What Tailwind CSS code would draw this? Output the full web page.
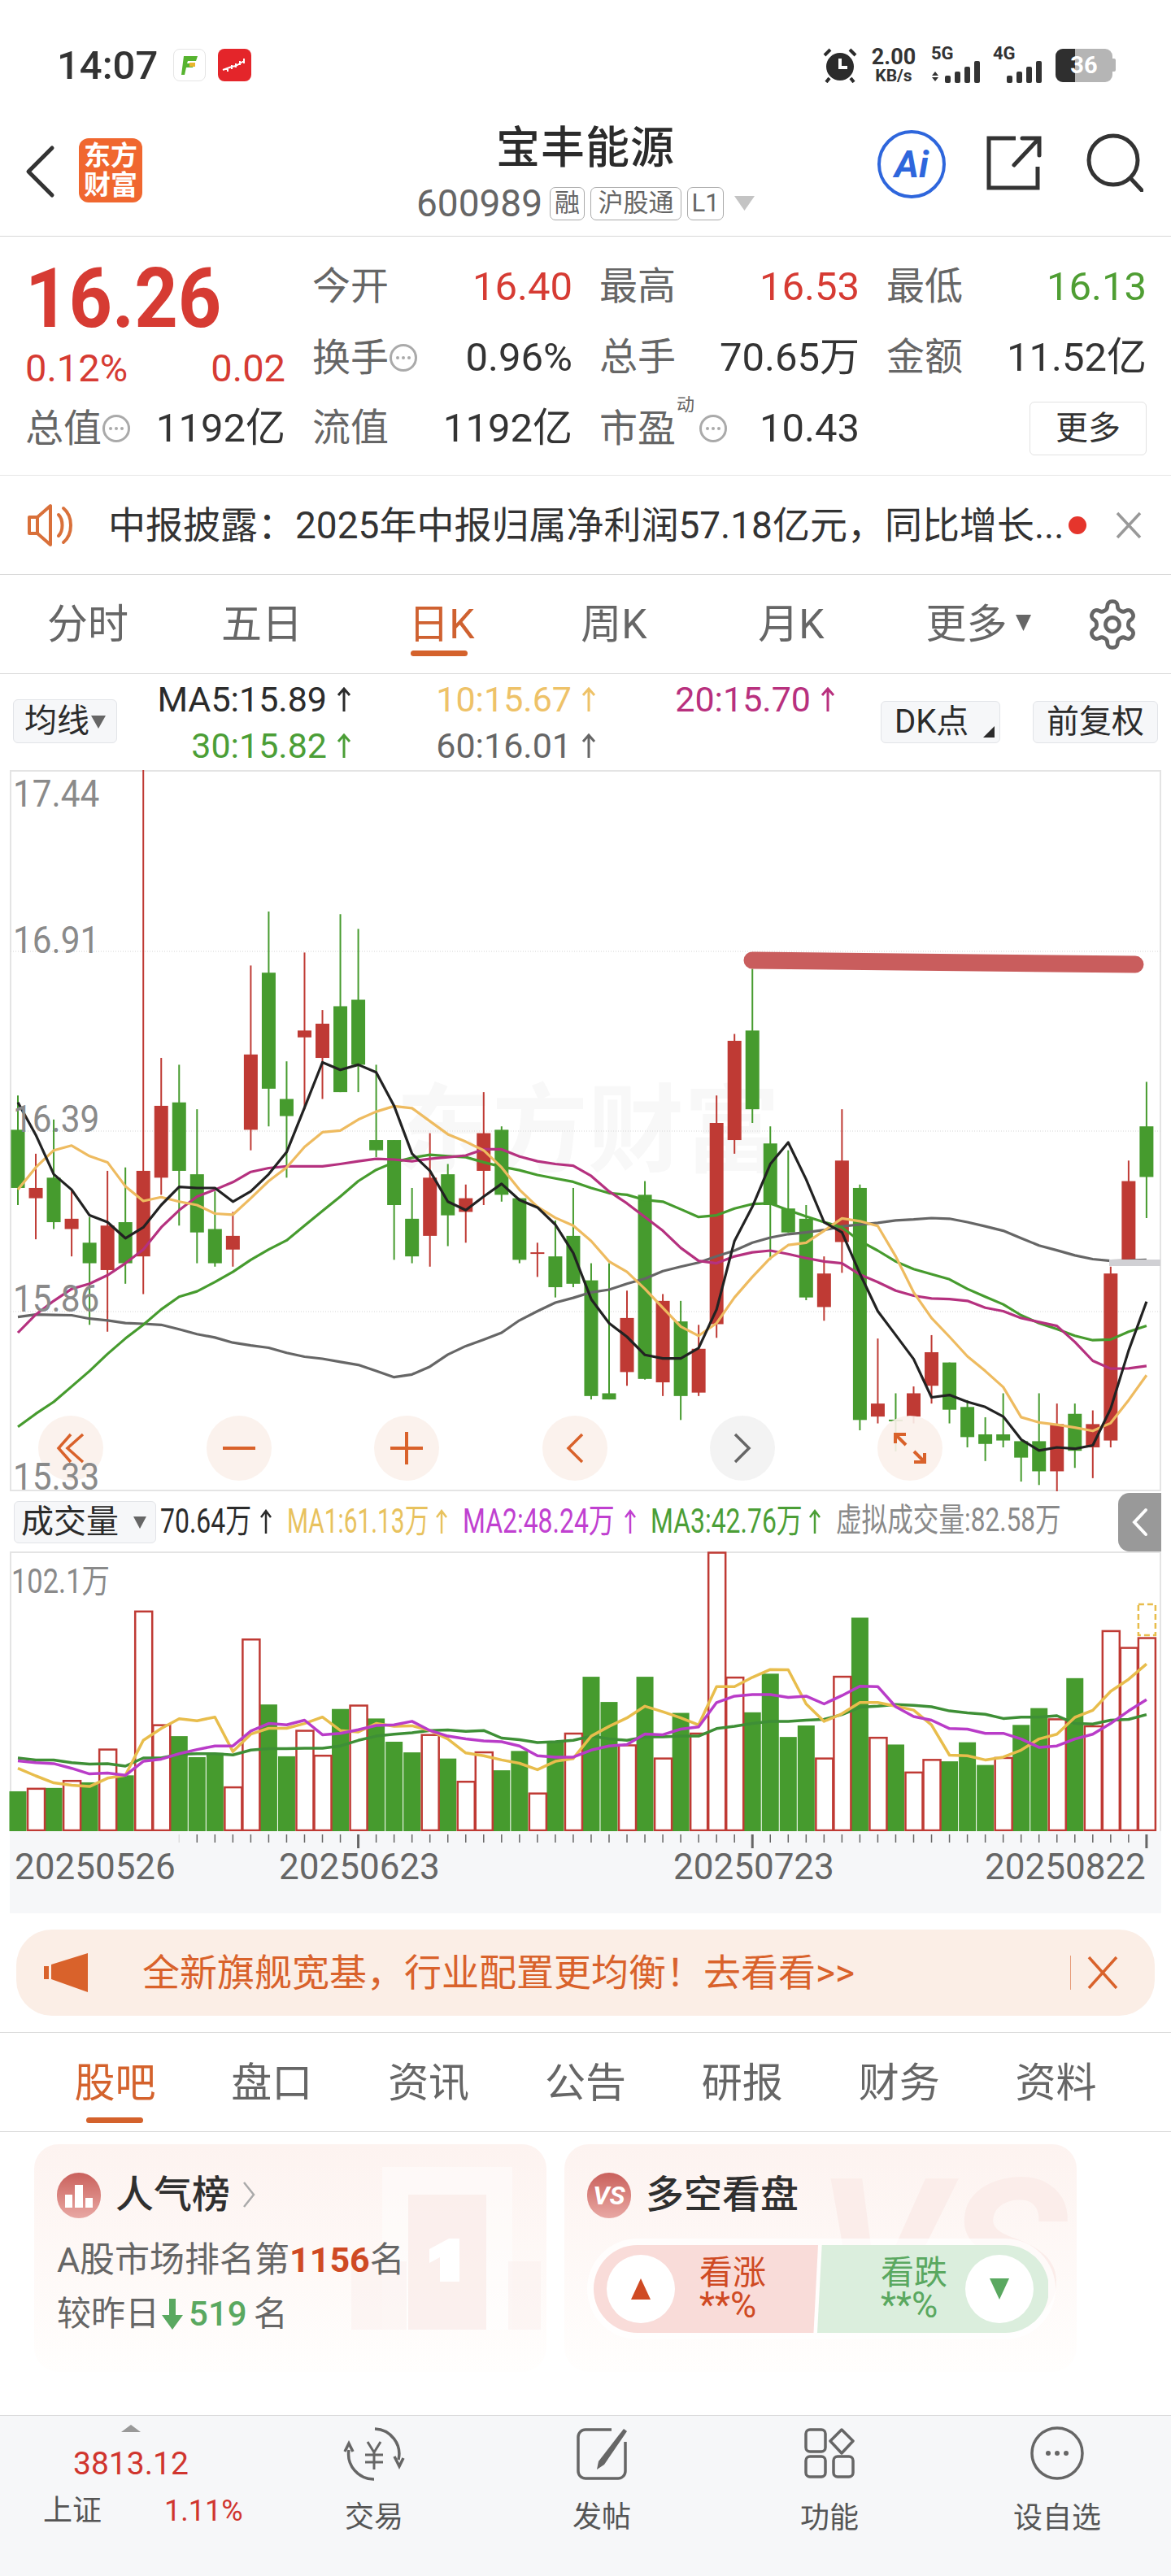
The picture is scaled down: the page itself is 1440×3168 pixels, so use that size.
<!DOCTYPE html>
<html lang="zh-CN">
<head>
  <meta charset="UTF-8" />
  <title>宝丰能源</title>
  <script src="https://cdn.jsdelivr.net/npm/@tailwindcss/browser@4"></script>
</head>
<body class="bg-white text-[#333] font-['Roboto','Noto_Sans_CJK_SC',sans-serif]">
<div class="w-[1440px] h-[3168px] overflow-hidden">

  <!-- status bar -->
  <div class="h-[150px] pt-[10px] flex items-center relative">
    <span class="ml-[70px] text-[49px] font-medium leading-none text-[#333]">14:07</span>
    <div class="ml-[19px] w-[40px] h-[40px] rounded-[8px] border border-[#e5e5e5] flex items-center justify-center">
      <svg width="24" height="28" viewBox="0 0 24 28"><path d="M5 3H22L20 9H10L9 12H18L16 17H8L6 26H2Z" fill="#56b32f"/><rect x="12" y="11" width="7" height="5" fill="#e9b52c"/></svg>
    </div>
    <div class="ml-[15px] w-[41px] h-[40px] rounded-[8px] bg-[#e4252a] flex items-center justify-center">
      <svg width="34" height="20" viewBox="0 0 34 20" fill="none" stroke="#fff" stroke-width="2"><path d="M2 16h3M8 14v4M13 10v5M18 8v5M23 5v5M28 2v6M2 16L13 12L18 11L28 5" /></svg>
    </div>
    <div class="ml-auto mr-[68px] flex items-center">
      <svg width="44" height="44" viewBox="0 0 44 44"><circle cx="22" cy="24" r="17" fill="#2b2b2b"/><path d="M22 14V25H31" fill="none" stroke="#fff" stroke-width="4"/><path d="M3 10L10 3M41 10L34 3M9 38L5 43M35 38L39 43" stroke="#2b2b2b" stroke-width="4"/></svg>
      <div class="ml-[16px] w-[56px] flex flex-col items-center font-bold text-[#333]">
        <span class="text-[27px] leading-[25px]">2.00</span>
        <span class="text-[21px] leading-[20px]">KB/s</span>
      </div>
      <div class="ml-[18px] w-[64px] h-[44px] relative">
        <span class="absolute left-0 top-[-3px] text-[22px] font-bold leading-none">5G</span>
        <svg class="absolute left-0 bottom-0" width="64" height="28" viewBox="0 0 64 28" fill="#333"><path d="M5 14L9 19H1ZM5 26L1 21H9Z"/><rect x="17" y="19" width="7" height="9" rx="2"/><rect x="29" y="14" width="7" height="14" rx="2"/><rect x="41" y="8" width="7" height="20" rx="2"/><rect x="53" y="1" width="7" height="27" rx="2"/></svg>
      </div>
      <div class="ml-[12px] w-[63px] h-[44px] relative">
        <span class="absolute left-0 top-[-3px] text-[22px] font-bold leading-none">4G</span>
        <svg class="absolute right-0 bottom-0" width="46" height="28" viewBox="0 0 46 28" fill="#333"><rect x="0" y="19" width="7" height="9" rx="2"/><rect x="12" y="14" width="7" height="14" rx="2"/><rect x="24" y="8" width="7" height="20" rx="2"/><rect x="36" y="1" width="7" height="27" rx="2"/></svg>
      </div>
      <div class="ml-[14px] w-[70px] h-[41px] rounded-[9px] overflow-hidden flex relative bg-[#b5b5b5]">
        <div class="w-[24px] bg-[#2f2f2f]"></div>
        <span class="absolute inset-0 flex items-center justify-center text-[29px] font-bold text-white leading-none">36</span>
      </div>
      <div class="w-[4px] h-[16px] bg-[#b5b5b5] rounded-r-[2px]"></div>
    </div>
  </div>

  <!-- nav -->
  <div class="h-[141px] border-b border-[#d9d9d9] grid grid-cols-[1fr_auto_1fr] pt-[6px]">
    <div class="flex items-start pl-[31px] pt-[22px]">
      <svg width="38" height="66" viewBox="0 0 38 66" fill="none" stroke="#333" stroke-width="5" stroke-linecap="round" stroke-linejoin="round"><path d="M33 4L4 33L33 62"/></svg>
      <div class="ml-[28px] mt-[-8px] w-[78px] h-[79px] rounded-[12px] bg-[#f0672f] text-white text-[33px] font-bold leading-[36px] flex flex-col items-center justify-center">
        <span>东方</span><span>财富</span>
      </div>
    </div>
    <div class="flex flex-col items-center">
      <div class="text-[54px] leading-[54px] font-medium tracking-[1px] text-[#2b2b2b]">宝丰能源</div>
      <div class="mt-[17px] flex items-center h-[46px] text-[#666]">
        <span class="text-[46px] leading-none">600989</span>
        <span class="ml-[9px] h-[41px] w-[43px] border border-[#aaa] rounded-[7px] text-[31px] flex items-center justify-center">融</span>
        <span class="ml-[7px] h-[41px] w-[112px] border border-[#aaa] rounded-[7px] text-[31px] flex items-center justify-center">沪股通</span>
        <span class="ml-[7px] h-[41px] w-[45px] border border-[#aaa] rounded-[7px] text-[31px] flex items-center justify-center">L1</span>
        <svg class="ml-[13px]" width="25" height="18" viewBox="0 0 25 18"><path d="M0 0H25L12.5 18Z" fill="#c4c4c4"/></svg>
      </div>
    </div>
    <div class="flex items-start justify-end pr-[34px] pt-[4px]">
      <div class="w-[84px] h-[84px] rounded-full border-[4px] border-[#2e66dc] flex items-center justify-center text-[#2e66dc] text-[46px] font-bold italic leading-none">Ai</div>
      <svg class="ml-[50px] mt-[7px]" width="68" height="68" viewBox="0 0 68 68" fill="none" stroke="#333" stroke-width="5"><path d="M36 3H3V64H63V38"/><path d="M34 36L64 4M44 3H65V24" stroke-linecap="round"/></svg>
      <svg class="ml-[53px] mt-[4px]" width="72" height="72" viewBox="0 0 72 72" fill="none" stroke="#333" stroke-width="5"><circle cx="35" cy="33" r="30"/><path d="M56 55L70 70" stroke-linecap="round"/></svg>
    </div>
  </div>

  <!-- quote -->
  <div class="h-[294px] border-b border-[#e6e6e6] pl-[31px] pt-[18px] grid grid-cols-[320px_320px_320px_320px] gap-x-[33px] grid-rows-[87px_87px_87px] items-center text-[49px] leading-none">
    <div class="row-span-2 self-start flex flex-col text-[#d63b33]">
      <span class="mt-[8px] text-[102px] leading-[100px] font-bold origin-left scale-x-[0.915]">16.26</span>
      <div class="mt-[11px] flex justify-between text-[47px] leading-[50px]"><span>0.12%</span><span>0.02</span></div>
    </div>
    <div class="flex justify-between"><span class="text-[47px] text-[#666]">今开</span><span class="text-[#d63b33]">16.40</span></div>
    <div class="flex justify-between"><span class="text-[47px] text-[#666]">最高</span><span class="text-[#d63b33]">16.53</span></div>
    <div class="flex justify-between"><span class="text-[47px] text-[#666]">最低</span><span class="text-[#4f9e33]">16.13</span></div>

    <div class="flex justify-between items-center">
      <span class="flex items-center text-[47px] text-[#666]">换手
        <svg width="36" height="36" viewBox="0 0 36 36" fill="none" stroke="#aaa" stroke-width="3"><circle cx="18" cy="18" r="15.5"/><g fill="#aaa" stroke="none"><circle cx="11" cy="18" r="2"/><circle cx="18" cy="18" r="2"/><circle cx="25" cy="18" r="2"/></g></svg>
      </span>
      <span>0.96%</span>
    </div>
    <div class="flex justify-between"><span class="text-[47px] text-[#666]">总手</span><span>70.65万</span></div>
    <div class="flex justify-between"><span class="text-[47px] text-[#666]">金额</span><span>11.52亿</span></div>

    <div class="flex justify-between items-center">
      <span class="flex items-center text-[47px] text-[#666]">总值
        <svg width="36" height="36" viewBox="0 0 36 36" fill="none" stroke="#aaa" stroke-width="3"><circle cx="18" cy="18" r="15.5"/><g fill="#aaa" stroke="none"><circle cx="11" cy="18" r="2"/><circle cx="18" cy="18" r="2"/><circle cx="25" cy="18" r="2"/></g></svg>
      </span>
      <span>1192亿</span>
    </div>
    <div class="flex justify-between"><span class="text-[47px] text-[#666]">流值</span><span>1192亿</span></div>
    <div class="flex justify-between items-center">
      <span class="flex items-center text-[47px] text-[#666] relative">市盈
        <span class="absolute left-[95px] top-[-16px] text-[22px]">动</span>
        <svg class="ml-[28px]" width="36" height="36" viewBox="0 0 36 36" fill="none" stroke="#aaa" stroke-width="3"><circle cx="18" cy="18" r="15.5"/><g fill="#aaa" stroke="none"><circle cx="11" cy="18" r="2"/><circle cx="18" cy="18" r="2"/><circle cx="25" cy="18" r="2"/></g></svg>
      </span>
      <span>10.43</span>
    </div>
    <div class="flex justify-end">
      <span class="w-[144px] h-[66px] border border-[#e2e2e2] rounded-[6px] text-[40px] flex items-center justify-center">更多</span>
    </div>
  </div>

  <!-- notice -->
  <div class="h-[122px] border-b border-[#d9d9d9] flex items-center pl-[34px] relative">
    <svg width="60" height="54" viewBox="0 0 60 54" fill="none" stroke="#d9703a" stroke-width="4" stroke-linejoin="round"><path d="M2 17H12L28 3V51L12 37H2Z"/><path d="M12 17V37"/><path d="M38 14C44 20 44 34 38 40M44 6C56 16 56 38 44 48" stroke-linecap="round"/></svg>
    <span class="ml-[39px] text-[46px] leading-none text-[#333] whitespace-nowrap">中报披露：2025年中报归属净利润57.18亿元，同比增长...</span>
    <span class="absolute left-[1314px] top-[50px] w-[22px] h-[22px] rounded-full bg-[#e5352c]"></span>
    <svg class="absolute left-[1371px] top-[44px]" width="34" height="34" viewBox="0 0 34 34" stroke="#999" stroke-width="3.5"><path d="M3 2L31 32M31 2L3 32"/></svg>
  </div>

  <!-- period tabs -->
  <div class="h-[122px] border-b border-[#d9d9d9] flex text-[50px] text-[#666] leading-none">
    <div class="grid grid-cols-[216px_212px_230px_194px_242px_218px] items-center">
      <span class="text-center">分时</span>
      <span class="text-center">五日</span>
      <span class="text-center text-[#cf6130] relative">日K<span class="absolute left-[77px] top-[57px] w-[70px] h-[7px] rounded-full bg-[#d4622c]"></span></span>
      <span class="text-center">周K</span>
      <span class="text-center">月K</span>
      <span class="flex items-center justify-center">更多<svg class="ml-[10px] mb-[4px]" width="19" height="20" viewBox="0 0 19 20"><path d="M0 0H19L9.5 20Z" fill="#666"/></svg></span>
    </div>
    <svg class="ml-[22px] mt-[27px]" width="68" height="68" viewBox="0 0 24 24" fill="none" stroke="#666" stroke-width="1.7" stroke-linejoin="round"><path d="M12.22 2h-.44a2 2 0 0 0-2 2v.18a2 2 0 0 1-1 1.73l-.43.25a2 2 0 0 1-2 0l-.15-.08a2 2 0 0 0-2.73.73l-.22.38a2 2 0 0 0 .73 2.73l.15.1a2 2 0 0 1 1 1.72v.51a2 2 0 0 1-1 1.74l-.15.09a2 2 0 0 0-.73 2.73l.22.38a2 2 0 0 0 2.73.73l.15-.08a2 2 0 0 1 2 0l.43.25a2 2 0 0 1 1 1.73V20a2 2 0 0 0 2 2h.44a2 2 0 0 0 2-2v-.18a2 2 0 0 1 1-1.73l.43-.25a2 2 0 0 1 2 0l.15.08a2 2 0 0 0 2.73-.73l.22-.39a2 2 0 0 0-.73-2.73l-.15-.08a2 2 0 0 1-1-1.74v-.5a2 2 0 0 1 1-1.74l.15-.09a2 2 0 0 0 .73-2.73l-.22-.38a2 2 0 0 0-2.73-.73l-.15.08a2 2 0 0 1-2 0l-.43-.25a2 2 0 0 1-1-1.73V4a2 2 0 0 0-2-2z"/><circle cx="12" cy="12" r="3"/></svg>
  </div>

  <!-- MA legend -->
  <div class="h-[118px] flex items-start text-[43px] leading-none">
    <div class="ml-[16px] mt-[31px] w-[128px] h-[54px] rounded-[6px] border border-[#e2e4e8] bg-[#f6f7f9] flex items-center justify-center text-[40px] text-[#2b2b2b]">均线<svg class="ml-[2px]" width="18" height="18" viewBox="0 0 18 18"><path d="M0 2H18L9 18Z" fill="#666"/></svg></div>
    <div class="grid grid-cols-[288px_301px_294px] grid-rows-[57px_57px] items-center pt-[3px]">
      <span class="flex items-center justify-end gap-[12px] text-[#2b2b2b]">MA5:15.89<svg width="18" height="31" viewBox="0 0 18 31" fill="none" stroke="currentColor" stroke-width="3"><path d="M9 30V2M2 10L9 2L16 10"/></svg></span>
      <span class="flex items-center justify-end gap-[12px] text-[#eec268]">10:15.67<svg width="18" height="31" viewBox="0 0 18 31" fill="none" stroke="currentColor" stroke-width="3"><path d="M9 30V2M2 10L9 2L16 10"/></svg></span>
      <span class="flex items-center justify-end gap-[12px] text-[#b8307e]">20:15.70<svg width="18" height="31" viewBox="0 0 18 31" fill="none" stroke="currentColor" stroke-width="3"><path d="M9 30V2M2 10L9 2L16 10"/></svg></span>
      <span class="flex items-center justify-end gap-[12px] text-[#4b9e36]">30:15.82<svg width="18" height="31" viewBox="0 0 18 31" fill="none" stroke="currentColor" stroke-width="3"><path d="M9 30V2M2 10L9 2L16 10"/></svg></span>
      <span class="flex items-center justify-end gap-[12px] text-[#666]">60:16.01<svg width="18" height="31" viewBox="0 0 18 31" fill="none" stroke="currentColor" stroke-width="3"><path d="M9 30V2M2 10L9 2L16 10"/></svg></span>
    </div>
    <div class="ml-[56px] mt-[33px] w-[147px] h-[52px] rounded-[6px] border border-[#e2e4e8] bg-[#f6f7f9] flex items-center pl-[16px] text-[40px] text-[#2b2b2b] relative">DK点<svg class="absolute right-[6px] bottom-[6px]" width="14" height="14" viewBox="0 0 14 14"><path d="M14 0V14H0Z" fill="#2b2b2b"/></svg></div>
    <div class="ml-[40px] mt-[33px] w-[154px] h-[52px] rounded-[6px] border border-[#e2e4e8] bg-[#f6f7f9] flex items-center justify-center text-[40px] text-[#2b2b2b]">前复权</div>
  </div>

  <!-- candle chart -->
  <div class="relative h-[887px]">
    <div class="absolute left-[487px] top-[386px] text-[118px] leading-none font-bold text-[#f8f8f8] whitespace-nowrap">东方财富</div>
    <svg id="kline" class="absolute inset-0" width="1440" height="887" viewBox="0 947 1440 887"></svg>

    <div class="absolute left-[47px] top-[794px] w-[80px] h-[80px] rounded-full bg-[#fbf1eb]/90 flex items-center justify-center">
      <svg width="36" height="38" viewBox="0 0 36 38" fill="none" stroke="#d9622b" stroke-width="3.5"><path d="M18 2L3 19L18 36M33 2L14 19L33 36"/></svg>
    </div>
    <div class="absolute left-[254px] top-[794px] w-[80px] h-[80px] rounded-full bg-[#fbf1eb]/90 flex items-center justify-center">
      <svg width="40" height="6" viewBox="0 0 40 6"><rect width="40" height="4" y="1" fill="#d9622b"/></svg>
    </div>
    <div class="absolute left-[460px] top-[794px] w-[80px] h-[80px] rounded-full bg-[#fbf1eb]/90 flex items-center justify-center">
      <svg width="40" height="40" viewBox="0 0 40 40" fill="#d9622b"><rect y="18" width="40" height="4"/><rect x="18" width="4" height="40"/></svg>
    </div>
    <div class="absolute left-[667px] top-[794px] w-[80px] h-[80px] rounded-full bg-[#fbf1eb]/90 flex items-center justify-center">
      <svg width="22" height="38" viewBox="0 0 22 38" fill="none" stroke="#d9622b" stroke-width="3.5"><path d="M20 2L3 19L20 36"/></svg>
    </div>
    <div class="absolute left-[873px] top-[794px] w-[80px] h-[80px] rounded-full bg-[#f2f2f2]/90 flex items-center justify-center">
      <svg width="22" height="38" viewBox="0 0 22 38" fill="none" stroke="#666" stroke-width="3.5"><path d="M2 2L19 19L2 36"/></svg>
    </div>
    <div class="absolute left-[1079px] top-[794px] w-[80px] h-[80px] rounded-full bg-[#fbf1eb]/90 flex items-center justify-center">
      <svg width="42" height="40" viewBox="0 0 42 40" fill="none" stroke="#d9622b" stroke-width="4"><path d="M3 14V3H16M3 3L16 16M39 26V37H26M39 37L26 24"/></svg>
    </div>

    <span class="absolute left-[16px] top-[6px] text-[46px] leading-none text-[#8a8a8a] origin-left scale-x-[0.92]">17.44</span>
    <span class="absolute left-[16px] top-[186px] text-[46px] leading-none text-[#8a8a8a] origin-left scale-x-[0.92]">16.91</span>
    <span class="absolute left-[16px] top-[406px] text-[46px] leading-none text-[#8a8a8a] origin-left scale-x-[0.92]">16.39</span>
    <span class="absolute left-[16px] top-[627px] text-[46px] leading-none text-[#8a8a8a] origin-left scale-x-[0.92]">15.86</span>
    <span class="absolute left-[16px] top-[846px] text-[46px] leading-none text-[#8a8a8a] origin-left scale-x-[0.92]">15.33</span>
  </div>

  <!-- volume legend -->
  <div class="h-[74px] relative">
    <div class="absolute left-[17px] top-[12px] w-[175px] h-[52px] rounded-[6px] border border-[#e2e4e8] bg-[#f6f7f9] flex items-center pl-[8px] text-[40px] leading-none text-[#2b2b2b]">成交量<svg class="ml-[18px]" width="16" height="16" viewBox="0 0 16 16"><path d="M0 1H16L8 16Z" fill="#666"/></svg></div>
    <span class="absolute left-[197px] top-[16px] text-[42px] leading-none whitespace-nowrap origin-left scale-x-[0.76] text-[#2b2b2b]">70.64万</span>
    <svg class="absolute left-[319px] top-[22px] text-[#2b2b2b]" width="16" height="31" viewBox="0 0 16 31" fill="none" stroke="currentColor" stroke-width="2.5"><path d="M8 30V2M2 10L8 2L14 10"/></svg>
    <span class="absolute left-[353px] top-[16px] text-[42px] leading-none whitespace-nowrap origin-left scale-x-[0.71] text-[#e8c25e]">MA1:61.13万</span>
    <svg class="absolute left-[535px] top-[22px] text-[#e8c25e]" width="16" height="31" viewBox="0 0 16 31" fill="none" stroke="currentColor" stroke-width="2.5"><path d="M8 30V2M2 10L8 2L14 10"/></svg>
    <span class="absolute left-[569px] top-[16px] text-[42px] leading-none whitespace-nowrap origin-left scale-x-[0.76] text-[#c040d0]">MA2:48.24万</span>
    <svg class="absolute left-[767px] top-[22px] text-[#c040d0]" width="16" height="31" viewBox="0 0 16 31" fill="none" stroke="currentColor" stroke-width="2.5"><path d="M8 30V2M2 10L8 2L14 10"/></svg>
    <span class="absolute left-[800px] top-[16px] text-[42px] leading-none whitespace-nowrap origin-left scale-x-[0.76] text-[#4b9e36]">MA3:42.76万</span>
    <svg class="absolute left-[994px] top-[22px] text-[#4b9e36]" width="16" height="31" viewBox="0 0 16 31" fill="none" stroke="currentColor" stroke-width="2.5"><path d="M8 30V2M2 10L8 2L14 10"/></svg>
    <span class="absolute left-[1028px] top-[16px] text-[40px] leading-none whitespace-nowrap origin-left scale-x-[0.79] text-[#8a8a8a]">虚拟成交量:82.58万</span>
    <div class="absolute right-[12px] top-[2px] w-[53px] h-[72px] rounded-l-[14px] bg-[#999] flex items-center justify-center">
      <svg width="20" height="36" viewBox="0 0 20 36" fill="none" stroke="#fff" stroke-width="4" stroke-linecap="round"><path d="M17 3L3 18L17 33"/></svg>
    </div>
  </div>

  <!-- volume chart -->
  <div class="relative h-[344px]">
    <svg id="volume" class="block" width="1440" height="344" viewBox="0 1908 1440 344"></svg>
    <span class="absolute left-[14px] top-[16px] text-[42px] leading-none whitespace-nowrap text-[#8a8a8a] origin-left scale-x-[0.82]">102.1万</span>
  </div>
  <div class="mx-[12px] h-[101px] bg-[#f6f7f9] relative text-[44px] leading-none text-[#666]">
    <svg id="ticks" class="absolute inset-0" width="1416" height="24" viewBox="12 2252 1416 24"></svg>
    <span class="absolute left-[6px] top-[22px]">20250526</span>
    <span class="absolute left-[331px] top-[22px]">20250623</span>
    <span class="absolute left-[816px] top-[22px]">20250723</span>
    <span class="absolute left-[1199px] top-[22px]">20250822</span>
  </div>

  <!-- promo banner -->
  <div class="h-[147px] pt-[20px] border-b border-[#d9d9d9]">
    <div class="mx-[20px] h-[106px] rounded-[44px] bg-[#fbeee6] flex items-center pl-[34px] relative">
      <svg width="56" height="48" viewBox="0 0 56 48" fill="#d9622b"><path d="M0 16H6V32H0ZM9 14L54 0V48L9 32Z"/></svg>
      <span class="ml-[65px] text-[46px] leading-none text-[#d9622b] whitespace-nowrap">全新旗舰宽基，行业配置更均衡！去看看&gt;&gt;</span>
      <span class="absolute left-[1296px] top-[32px] w-px h-[42px] bg-[#d9622b]/60"></span>
      <svg class="absolute left-[1317px] top-[33px]" width="38" height="40" viewBox="0 0 38 40" fill="none" stroke="#d9622b" stroke-width="3.5"><path d="M2 1L36 39M36 1L2 39"/></svg>
    </div>
  </div>

  <!-- info tabs -->
  <div class="h-[122px] border-b border-[#d9d9d9] px-[45px] grid grid-cols-7 text-[50px] leading-none text-[#666] items-start pt-[37px]">
    <span class="text-center text-[#d4622c] relative">股吧<span class="absolute left-[61px] top-[67px] w-[70px] h-[7px] rounded-full bg-[#d4622c]"></span></span>
    <span class="text-center">盘口</span>
    <span class="text-center">资讯</span>
    <span class="text-center">公告</span>
    <span class="text-center">研报</span>
    <span class="text-center">财务</span>
    <span class="text-center">资料</span>
  </div>

  <!-- cards -->
  <div class="h-[348px] pt-[15px] pl-[42px] flex gap-[22px]">
    <div class="w-[630px] h-[280px] rounded-[30px] overflow-hidden relative bg-linear-to-b from-[#fdf3f0] to-[#fffefd]">
      <svg class="absolute inset-0" width="630" height="280" viewBox="42 2636 630 280"><rect x="470" y="2664" width="160" height="200" fill="#fff" opacity=".45"/><rect x="432" y="2780" width="68" height="84" fill="#fbeeeb" opacity=".45"/><rect x="625" y="2780" width="40" height="84" fill="#fbeeeb" opacity=".45"/><rect x="502" y="2698" width="96" height="166" fill="#f8e7e4" opacity=".6"/><path d="M528 2765L552 2752H565V2805H541V2775L528 2782Z" fill="#fff"/></svg>
      <div class="absolute left-[28px] top-[35px] w-[54px] h-[56px] rounded-full bg-linear-to-b from-[#c9605c] to-[#e8a8a4] flex items-center justify-center">
        <svg width="36" height="30" viewBox="0 0 36 30" fill="#fff"><rect x="1" y="14" width="9" height="16"/><rect x="13" y="2" width="10" height="28"/><rect x="26" y="18" width="9" height="12"/></svg>
      </div>
      <div class="relative flex items-center pl-[100px] pt-[37px] text-[47px] leading-[50px] font-medium text-[#2f2f2f]">人气榜<svg class="ml-[15px]" width="16" height="36" viewBox="0 0 16 36" fill="none" stroke="#aaa" stroke-width="2.5"><path d="M2 3L14 18L2 33"/></svg></div>
      <div class="relative pl-[28px] mt-[30px] text-[43px] leading-[50px] text-[#666] whitespace-nowrap">A股市场排名第<span class="font-bold text-[#cf4a23]">1156</span>名</div>
      <div class="relative pl-[28px] mt-[17px] flex items-center text-[42px] leading-[50px] text-[#666]">较昨日
        <svg class="ml-[3px]" width="26" height="38" viewBox="0 0 26 38" fill="#5aa860"><path d="M9 0H17V20H26L13 38L0 20H9Z"/></svg>
        <span class="ml-[7px] font-medium text-[#5aa860] text-[42px]">519</span><span class="ml-[8px]">名</span>
      </div>
    </div>
    <div class="w-[630px] h-[280px] rounded-[30px] overflow-hidden relative bg-linear-to-b from-[#fdf3f0] to-[#fffefd]">
      <span class="absolute left-[310px] top-[10px] text-[250px] leading-none font-bold italic text-[#fbedea]">VS</span>
      <div class="absolute left-[28px] top-[35px] w-[54px] h-[56px] rounded-full bg-linear-to-b from-[#c9605c] to-[#e8a8a4] flex items-center justify-center text-white text-[32px] font-bold italic leading-none">VS</div>
      <div class="relative pl-[100px] pt-[37px] text-[47px] leading-[50px] font-medium text-[#2f2f2f]">多空看盘</div>
      <div class="absolute left-[28px] top-[116px] w-[576px] h-[124px] rounded-full bg-white/70 p-[8px]">
        <div class="h-[108px] rounded-full overflow-hidden flex relative">
          <div class="w-[276px] bg-[#f9dcd9] [clip-path:polygon(0_0,100%_0,98%_100%,0_100%)]"></div>
          <div class="w-[284px] ml-[-1px] bg-[#dbeedd] [clip-path:polygon(2%_0,100%_0,100%_100%,0_100%)]"></div>
          <div class="absolute left-[16px] top-[12px] w-[84px] h-[84px] rounded-full bg-white flex items-center justify-center"><svg width="24" height="30" viewBox="0 0 24 30"><path d="M12 2L24 28H0Z" fill="#cf4a23"/></svg></div>
          <div class="absolute left-[457px] top-[12px] w-[84px] h-[84px] rounded-full bg-white flex items-center justify-center"><svg width="24" height="30" viewBox="0 0 24 30"><path d="M0 2H24L12 28Z" fill="#5aa860"/></svg></div>
          <div class="absolute left-[130px] top-[12px] flex flex-col text-[#cf4a23]"><span class="text-[41px] leading-[44px]">看涨</span><span class="text-[44px] leading-[36px]">**%</span></div>
          <div class="absolute left-[353px] top-[12px] flex flex-col text-[#5aa860]"><span class="text-[41px] leading-[44px]">看跌</span><span class="text-[44px] leading-[36px]">**%</span></div>
        </div>
      </div>
    </div>
  </div>

  <!-- bottom bar -->
  <div class="h-[199px] border-t border-[#d9d9d9] bg-[#f6f7f9] pl-[40px] grid grid-cols-5 text-[36px] leading-none text-[#555] relative">
    <div class="relative">
      <svg class="absolute left-[109px] top-[11px]" width="24" height="9" viewBox="0 0 24 9"><path d="M12 0L24 9H0Z" fill="#999"/></svg>
      <span class="absolute left-[50px] top-[40px] text-[39px] text-[#d0352e]">3813.12</span>
      <span class="absolute left-[13px] top-[99px] text-[36px]">上证</span>
      <span class="absolute left-[162px] top-[99px] text-[36px] text-[#d0352e]">1.11%</span>
    </div>
    <div class="flex flex-col items-center pt-[12px]">
      <svg width="76" height="70" viewBox="0 0 76 70" fill="none" stroke="#666" stroke-width="3.5"><path d="M39 4A31 31 0 0 1 68 42M38 66A31 31 0 0 1 7 30"/><path d="M2 32L7 22L12 32M63 38L69 50L74 40"/><path d="M30 20L38 33L46 20M27 36H49M27 45H49M38 33V54" stroke-width="3"/></svg>
      <span class="mt-[25px]">交易</span>
    </div>
    <div class="flex flex-col items-center pt-[14px]">
      <svg width="64" height="66" viewBox="0 0 64 66" fill="none" stroke="#666" stroke-width="3.5"><path d="M44 3H12A9 9 0 0 0 3 12V54A9 9 0 0 0 12 63H52A9 9 0 0 0 61 54V18"/><path d="M59 2L63 5L35 46L26 52L28 42Z" fill="#666" stroke="none"/></svg>
      <span class="mt-[27px]">发帖</span>
    </div>
    <div class="flex flex-col items-center pt-[15px]">
      <svg width="62" height="62" viewBox="0 0 62 62" fill="none" stroke="#666" stroke-width="3.5"><rect x="2" y="2" width="24" height="27" rx="5"/><path d="M46 2L60 16L46 31L32 16Z" stroke-linejoin="round"/><rect x="2" y="35" width="24" height="25" rx="5"/><rect x="36" y="35" width="24" height="25" rx="5"/></svg>
      <span class="mt-[31px]">功能</span>
    </div>
    <div class="flex flex-col items-center pt-[13px]">
      <svg width="66" height="66" viewBox="0 0 66 66" fill="none" stroke="#666" stroke-width="3.5"><circle cx="33" cy="33" r="31"/><g fill="#666" stroke="none"><circle cx="22" cy="33" r="3"/><circle cx="33" cy="33" r="3"/><circle cx="44" cy="33" r="3"/></g></svg>
      <span class="mt-[29px]">设自选</span>
    </div>
  </div>
</div>

<script>
  // candle spacing in px, everything below is in page coordinates
  const cx = i => 22 + 22.03 * i;
  const ky = v => 1240 + v / 2.376;
  const vy = v => 1820 + v / 2.9037;

  // [up?, high, bodyTop, bodyBottom, low]
  const candles = [
    [0,255,355,525,575],[1,425,525,555,675],[0,325,495,625,645],[1,530,615,645,725],[0,610,685,745,925],[1,475,635,765,945],[0,465,625,745,805],[1,-696,475,725,835],
    [1,145,285,495,545],[0,165,275,475,635],[0,295,485,655,745],[0,535,645,745,755],[1,595,665,705,755],[1,-125,135,355,415],[0,-283,-104,235,345],[0,155,265,315,495],
    [1,-163,65,85,295],[1,5,45,145,265],[0,-275,-6,245,245],[0,-232,-25,165,245],[0,165,385,415,435],[0,385,385,575,735],[0,525,615,725,745],[1,365,495,665,755],
    [0,455,485,605,695],[1,515,555,595,685],[1,245,365,475,575],[0,345,355,545,565],[0,555,555,735,745],[1,685,713,716,785],[0,620,725,815,845],[0,525,665,805,815],
    [0,745,795,1133,1143],[0,745,1125,1143,1143],[1,825,905,1063,1103],[0,505,545,1083,1085],[1,835,855,1093,1133],[0,855,915,1133,1203],[1,925,995,1123,1133],[1,255,335,923,963],
    [1,75,95,385,425],[0,-115,65,295,335],[0,345,395,575,735],[0,415,585,655,655],[0,575,615,845,853],[1,725,775,873,913],[1,295,445,683,773],[0,515,525,1203,1233],
    [1,965,1155,1193,1213],[0,1125,1202,1206,1295],[1,1105,1125,1193,1213],[1,955,1005,1103,1155],[0,1035,1035,1173,1213],[0,1145,1165,1253,1283],[0,1195,1245,1273,1323],[0,1125,1245,1263,1283],
    [0,1265,1265,1313,1383],[0,1125,1265,1353,1393],[1,1155,1215,1353,1413],[0,1155,1185,1293,1343],[1,1175,1215,1283,1373],[1,755,775,1263,1283],[1,445,505,735,735],[0,215,345,493,613]
  ];
  const ma5 = [275,370,485,530,605,625,672,640,575,522,525,525,565,535,485,420,290,158,180,165,187,285,425,475,565,590,550,513,560,582,632,715,850,920,960,1013,1023,1023,993,880,680,580,455,392,500,625,655,775,885,955,1025,1137,1130,1150,1165,1193,1260,1292,1283,1287,1277,1170,1000,857];
  const ma10 = [530,465,415,401,432,450,520,563,552,565,575,600,603,555,505,465,405,362,357,325,302,286,292,330,368,390,415,465,530,580,612,635,680,740,770,820,875,930,957,920,845,785,730,692,685,650,614,622,636,725,830,905,960,1017,1060,1107,1195,1210,1217,1225,1235,1212,1145,1072];
  const ma20 = [948,895,855,820,805,780,745,705,640,590,550,530,508,478,467,462,462,462,455,447,440,442,447,440,435,430,412,412,433,447,455,460,490,535,570,610,650,700,738,745,725,713,708,718,730,740,745,778,800,825,840,848,850,855,875,885,905,917,928,975,1030,1053,1052,1045];
  const ma30 = [1223,1185,1150,1105,1060,1010,965,925,880,843,827,800,770,735,705,678,635,592,550,505,472,450,437,428,432,435,450,463,473,487,497,507,525,540,545,560,565,587,610,605,585,572,570,590,608,625,640,680,708,740,762,777,792,820,843,865,897,920,937,957,970,968,945,928];
  const ma60 = [902,895,896,897,907,912,920,922,925,938,952,962,977,985,992,1007,1018,1024,1033,1042,1060,1078,1070,1047,1012,987,968,948,912,885,860,846,830,822,805,790,768,755,743,725,708,685,670,660,655,648,637,632,627,620,617,613,615,625,637,650,672,693,707,722,733,738,737,735];

  const RED = '#bf3a34', GREEN = '#469b2e';
  const line = (data, fy, color, w) =>
    `<polyline fill="none" stroke="${color}" stroke-width="${w}" stroke-linejoin="round" points="${data.map((v, i) => cx(i).toFixed(1) + ',' + fy(v).toFixed(1)).join(' ')}"/>`;

  let k = '';
  k += '<path d="M13 947V1833M1427 947V1833M12 948H1428M12 1833H1428" fill="none" stroke="#e4e4e4" stroke-width="2"/>';
  [1170, 1391, 1613].forEach(y => { k += `<line x1="13" x2="1427" y1="${y}" y2="${y}" stroke="#d4d4d4" stroke-dasharray="1 2"/>`; });
  candles.forEach((c, i) => {
    const col = c[0] ? RED : GREEN, x = cx(i);
    k += `<line x1="${x}" x2="${x}" y1="${ky(c[1])}" y2="${ky(c[4])}" stroke="${col}" stroke-width="2"/>`;
    k += `<rect x="${x - 8.5}" y="${ky(c[2])}" width="17" height="${Math.max(2, (c[3] - c[2]) / 2.376)}" fill="${col}"/>`;
  });
  k += line(ma60, ky, '#666', 3.2) + line(ma30, ky, GREEN, 3.2) + line(ma20, ky, '#b5317f', 3.2) + line(ma10, ky, '#eebb60', 3.2) + line(ma5, ky, '#222', 3.2);
  k += '<rect x="1364" y="1549" width="63" height="8" fill="#d0d0d4"/>';
  k += '<line x1="925" y1="1181" x2="1396" y2="1186" stroke="#c95d5d" stroke-width="21" stroke-linecap="round"/>';
  document.getElementById('kline').innerHTML = k;

  // volume: [up?, top]
  const vols = [[0,1112],[1,1100],[0,1100],[1,1072],[0,1080],[1,960],[0,1055],[1,467],[1,873],[0,915],[0,990],[0,975],[1,1095],[1,567],[0,802],[0,987],[1,893],[1,982],[0,818],[1,803],[0,852],[0,935],[0,973],[1,908],[0,995],[1,1075],[1,970],[0,1037],[0,968],[1,1117],[0,935],[1,903],
    [0,703],[0,793],[1,945],[0,703],[1,992],[0,832],[1,903],[1,257],[1,703],[0,830],[0,692],[0,918],[0,877],[1,992],[1,700],[0,492],[1,918],[0,945],[1,1042],[1,997],[0,1005],[0,937],[0,1018],[1,990],[0,875],[0,815],[1,852],[0,708],[1,877],[1,537],[1,597],[1,562]];
  const vma1 = [1030,1057,1082,1090,1095,1065,1055,930,888,853,860,847,970,908,887,887,870,847,895,900,870,880,878,895,925,975,985,1000,1012,1035,1005,995,915,880,850,808,828,850,875,738,738,705,677,678,800,862,835,795,795,808,822,875,983,985,1000,990,965,925,908,848,823,755,712,657];
  const vma2 = [1003,1010,1013,1030,1050,1047,1055,1005,997,978,963,950,950,897,870,875,858,910,905,892,877,875,862,895,915,925,932,935,950,985,990,990,965,950,945,907,910,890,882,795,772,767,767,777,772,800,770,737,738,810,845,858,888,890,905,905,925,955,950,925,908,870,825,785];
  const vma3 = [993,1000,1000,1010,1015,1013,1022,993,993,980,978,978,982,965,960,960,958,958,950,930,915,908,903,895,893,898,895,922,928,938,935,930,915,925,930,918,918,915,915,888,880,870,862,862,858,855,838,812,808,802,805,810,825,832,837,852,847,847,842,870,872,858,855,838];

  let v = '<path d="M13 1908V2252M1427 1908V2252M12 1909H1428" fill="none" stroke="#e4e4e4" stroke-width="2"/>';
  const base = 2252;
  vols.forEach((b, i) => {
    if (b[0]) return;
    v += `<rect x="${cx(i) - 10.5}" y="${vy(b[1])}" width="21" height="${base - vy(b[1])}" fill="${GREEN}"/>`;
  });
  vols.forEach((b, i) => {
    if (!b[0]) return;
    v += `<rect x="${cx(i) - 10}" y="${vy(b[1]) + 1}" width="21" height="${base - vy(b[1]) - 2}" fill="#fff" stroke="${RED}" stroke-width="2.5"/>`;
  });
  v += `<rect x="${cx(63) - 10}" y="1973" width="21" height="38" fill="none" stroke="#e8bd4c" stroke-width="2.5" stroke-dasharray="7 4"/>`;
  v += line(vma3, vy, '#3e8f36', 3.5) + line(vma1, vy, '#e8bd4c', 3.5) + line(vma2, vy, '#b93cc8', 3.5);
  document.getElementById('volume').innerHTML = v;

  let t = '';
  for (let i = 9; i < 64; i++) {
    const major = i === 19 || i === 41 || i === 63;
    t += `<line x1="${cx(i)}" x2="${cx(i)}" y1="2256" y2="${major ? 2273 : 2266}" stroke="${i < 10 ? '#ddd' : '#666'}" stroke-width="${major ? 3 : 1.5}"/>`;
  }
  document.getElementById('ticks').innerHTML = t;
</script>
</body>
</html>
